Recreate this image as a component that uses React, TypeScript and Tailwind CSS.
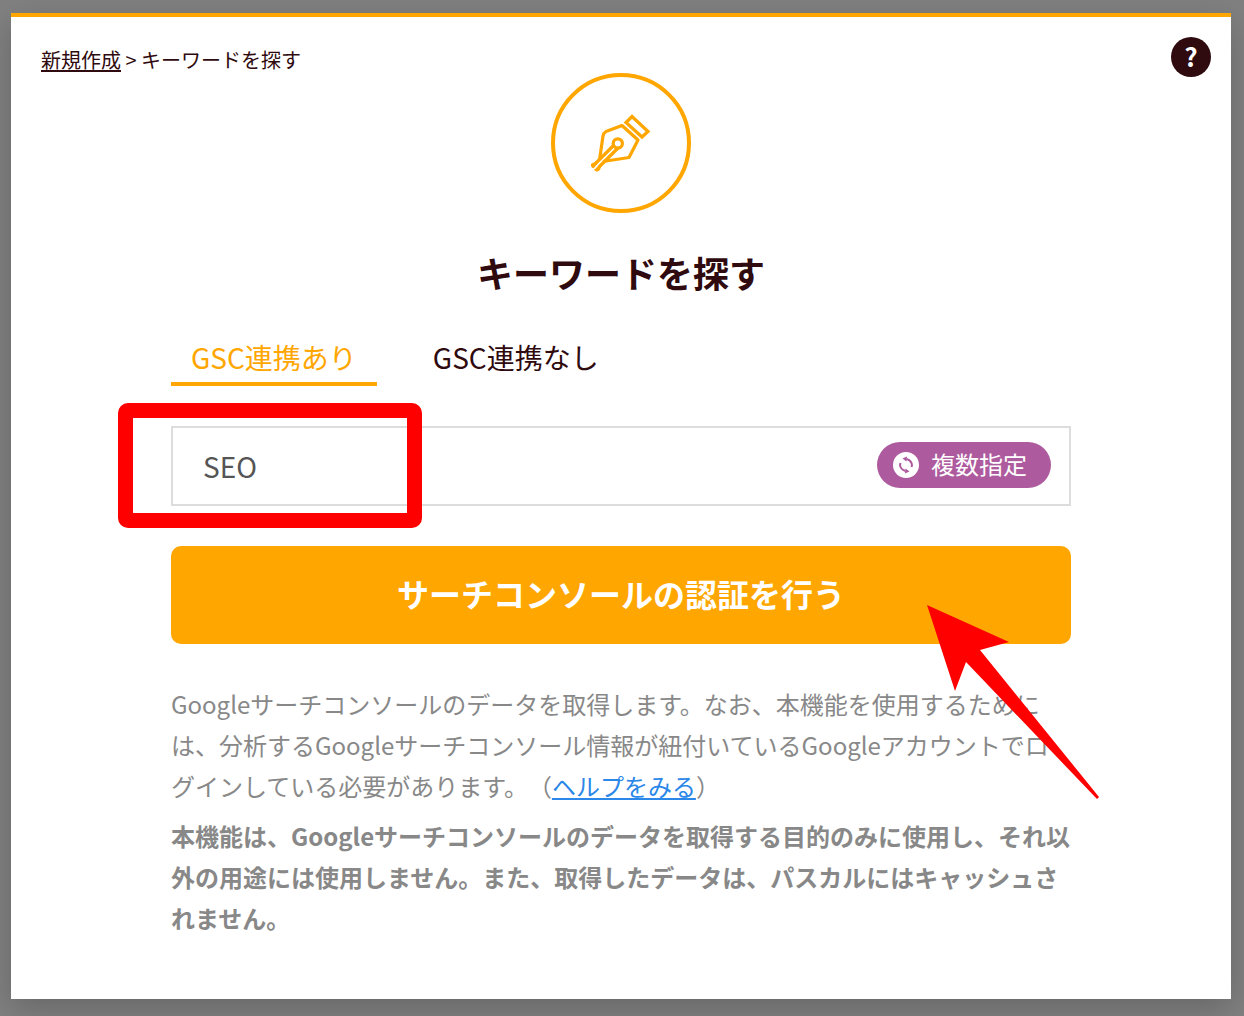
import { useState } from "react";

function PenIcon() {
  return (
    <svg width="60" height="58" viewBox="0 0 60 58" fill="none" stroke="#ffa600" strokeWidth="3.2" aria-hidden="true">
      <path d="M41 2.500 57 17.500 51 23 35 8.500Z" />
      <path d="M8.500 46 12 22Q12.500 19 15 17.500L31 11.500 47 26 38 43.500 12 47.500" strokeLinejoin="round" />
      <circle cx="26.800" cy="29.500" r="4.600" />
      <path d="M23.500 30.500 4 50M27.500 33.500 8 53" />
      <path d="M0 50.500Q1 48.500 3.500 49L6 49.500 2.500 54Q-.500 53 0 50.500ZM3.500 56 8.500 51 9.500 53 8.500 56Q6 58.500 3.500 56Z" fill="#ffa600" stroke="#ffa600" strokeWidth="0.8" />
    </svg>
  );
}

function SwapIcon() {
  return (
    <svg width="26" height="26" viewBox="0 0 26 26" aria-hidden="true">
      <circle cx="13" cy="13" r="13" fill="#fff" />
      <g fill="none" stroke="#ad5b9e" strokeWidth="2">
        <path d="M13.500 7Q18.500 8.500 19 13L18.500 15" />
        <path d="M12.500 19Q7.500 17.500 7 13L7.500 11" />
      </g>
      <path d="M9.500 6.500 14 4.500 13.500 9.500ZM16.500 19.500 12 21.500 12.500 16.500Z" fill="#ad5b9e" />
    </svg>
  );
}

const tabs = ["GSC連携あり", "GSC連携なし"];

export default function App() {
  const [active, setActive] = useState(0);
  const [keyword, setKeyword] = useState("SEO");

  return (
    <div className="flex min-h-screen flex-col bg-[#808080] pt-[13px] pr-[13px] pb-[17px] pl-[11px] font-['Noto_Sans_CJK_JP',sans-serif] text-[#2f0a0e]">
      <main className="relative grow border-t-4 border-[#ffa600] bg-white px-[30px] pb-10 shadow-[0_10px_30px_rgba(0,0,0,0.2)]">
        <nav aria-label="パンくず" className="absolute top-7 left-[30px] text-xl leading-[30px]">
          <a href="#new" className="underline decoration-2 underline-offset-2 [text-decoration-skip-ink:none]">新規作成</a>
          {" > キーワードを探す"}
        </nav>
        <button
          type="button"
          aria-label="ヘルプ"
          className="absolute top-5 right-5 flex size-10 items-center justify-center rounded-full bg-[#2f0a0e] pb-0.5 text-[26px] leading-10 font-bold text-white"
        >
          ?
        </button>

        <div className="mx-auto max-w-[900px] pt-14">
          <div className="mx-auto flex size-[140px] items-center justify-center rounded-full border-4 border-[#ffa600]">
            <PenIcon />
          </div>
          <h1 className="mt-8 text-center text-4xl leading-[54px] font-bold">キーワードを探す</h1>

          <div role="tablist" className="mt-[37px] flex gap-9">
            {tabs.map((label, i) => (
              <button
                key={label}
                type="button"
                role="tab"
                aria-selected={active === i}
                onClick={() => setActive(i)}
                className={
                  active === i
                    ? "border-b-4 border-[#ffa600] px-5 pb-1 text-[28px] leading-[42px] text-[#ffa600]"
                    : "border-b-4 border-transparent px-5 pb-1 text-[28px] leading-[42px]"
                }
              >
                {label}
              </button>
            ))}
          </div>

          <div className="relative mt-10">
            <div className="flex h-20 items-center border-2 border-[#ddd] pr-[18px] pl-[30px]">
              <input
                aria-label="キーワード"
                value={keyword}
                onChange={(e) => setKeyword(e.target.value)}
                className="min-w-0 grow text-[28px] leading-[42px] text-[#555] outline-none"
              />
              <button
                type="button"
                className="mb-0.5 flex h-[46px] shrink-0 items-center gap-3 rounded-full bg-[#ad5b9e] pr-6 pl-4 text-2xl leading-[46px] text-white"
              >
                <SwapIcon />
                <span className="pb-0.5">複数指定</span>
              </button>
            </div>
            <div className="pointer-events-none absolute -top-[23px] -left-[53px] h-[125px] w-[304px] rounded-[10px] border-[15px] border-[#f00]" />
          </div>

          <div className="relative mt-10">
            <button
              type="button"
              className="h-[98px] w-full rounded-[10px] bg-[#ffa600] pb-1 text-[32px] leading-[48px] font-bold text-white"
            >
              サーチコンソールの認証を行う
            </button>
            <svg
              width="174"
              height="196"
              viewBox="0 0 174 196"
              fill="#f00"
              aria-hidden="true"
              className="pointer-events-none absolute top-[59px] -right-[30px]"
            >
              <path d="M0 0 82 37 53 45 172 192 170 194 39 57 28 86Z" />
            </svg>
          </div>

          <div className="mt-[39px] text-2xl leading-[41px] text-[#888] [text-spacing-trim:space-all]">
            <p>
              Googleサーチコンソールのデータを取得します。なお、本機能を使用するためには、分析するGoogleサーチコンソール情報が紐付いているGoogleアカウントでログインしている必要があります。（<a
                href="#help"
                className="text-[#2b87e8] underline decoration-2 underline-offset-2 [text-decoration-skip-ink:none]"
              >ヘルプをみる</a>）
            </p>
            <p className="mt-[9px] font-bold">
              本機能は、Googleサーチコンソールのデータを取得する目的のみに使用し、それ以外の用途には使用しません。また、取得したデータは、パスカルにはキャッシュされません。
            </p>
          </div>
        </div>
      </main>
    </div>
  );
}
